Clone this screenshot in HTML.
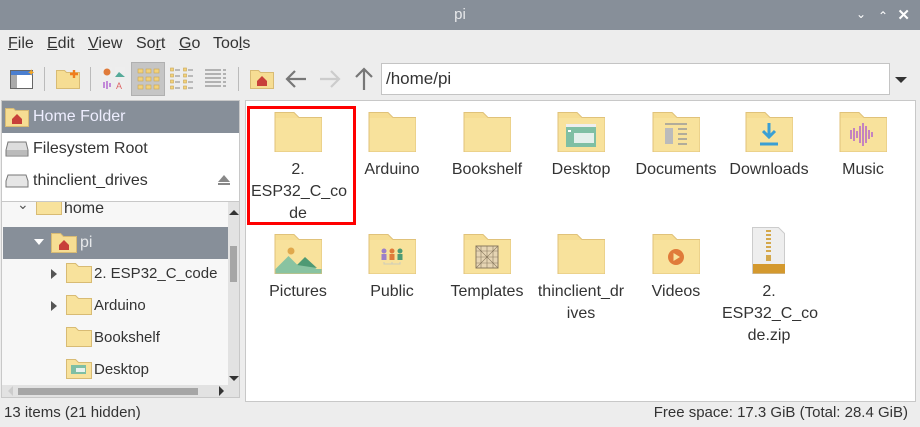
<!DOCTYPE html>
<html><head><meta charset="utf-8">
<style>
*{margin:0;padding:0;box-sizing:border-box}
body{width:920px;height:427px;overflow:hidden;background:#ededed;font-family:"Liberation Sans",sans-serif;font-size:15px;color:#333;position:relative}
.a{position:absolute}
.title{left:0;top:0;width:920px;height:30px;background:#878f99;color:#e8eaec;text-align:center;line-height:30px;font-size:15px}
.menu span{position:absolute;top:35px;font-size:16px;color:#333}
.u{text-decoration:underline}
.sep{position:absolute;top:67px;width:1px;height:24px;background:#bbb}
.item{position:absolute;width:94px;text-align:center;font-size:16px;line-height:22px;color:#333}
.item svg{display:block;margin:0 auto 7px}
.tr{position:absolute;font-size:15px;color:#333}
</style></head><body>
<svg width="0" height="0" style="position:absolute">
<defs>
<g id="fd"><path d="M1 0.5h19l5 5h22.5v34h-46.5z" fill="#f6dd93" stroke="#e0c27a"/><path d="M1.5 6h46v33.5h-46z" fill="#f8e29c"/></g>
<g id="sf"><path d="M0.5 0.5h9l3 3h13v16h-25z" fill="#f8e29c" stroke="#d8bb74"/></g>
</defs></svg>

<div class="a title">pi</div>
<div class="a" style="right:54px;top:7px;color:#fff;font-size:12px">&#8964;</div>
<div class="a" style="right:32px;top:9px;color:#fff;font-size:12px">&#8963;</div>
<div class="a" style="right:10px;top:6px;color:#fff;font-size:15px;font-weight:bold">✕</div>

<div class="menu">
<span style="left:8px"><span class="u" style="position:static">F</span>ile</span>
<span style="left:47px"><span class="u" style="position:static">E</span>dit</span>
<span style="left:88px"><span class="u" style="position:static">V</span>iew</span>
<span style="left:136px">So<span class="u" style="position:static">r</span>t</span>
<span style="left:179px"><span class="u" style="position:static">G</span>o</span>
<span style="left:213px">Too<span class="u" style="position:static">l</span>s</span>
</div>

<!-- toolbar -->
<svg class="a" style="left:10px;top:68px" width="24" height="22"><rect x="0.5" y="2.5" width="22" height="18" fill="#fff" stroke="#666"/><rect x="1" y="3" width="22" height="4" fill="#4b7fd0"/><rect x="1" y="7" width="6" height="13" fill="#aaa"/><text x="17" y="8" font-size="10" fill="#f5a623">✦</text></svg>
<div class="sep" style="left:44px"></div>
<svg class="a" style="left:56px;top:68px" width="25" height="22"><path d="M0.5 2.5h8l2 2h13v16h-23z" fill="#f6dd93" stroke="#d8bb74"/><path d="M18 2v8M14 6h8" stroke="#f07d1e" stroke-width="2.4"/></svg>
<div class="sep" style="left:90px"></div>
<svg class="a" style="left:102px;top:67px" width="24" height="24"><rect x="0" y="0" width="10" height="10" fill="#eee"/><circle cx="5" cy="5" r="3.5" fill="#e07b3a"/><rect x="13" y="0" width="10" height="10" fill="#eee"/><path d="M13 10l4-5 6 5z" fill="#5a9"/><rect x="0" y="13" width="10" height="10" fill="#eee"/><path d="M2 15v6M5 14v8M8 16v4" stroke="#a5c" stroke-width="1.3"/><rect x="13" y="13" width="10" height="10" fill="#eee"/><text x="14" y="22" font-size="9" fill="#d66">A</text></svg>
<div class="a" style="left:131px;top:62px;width:34px;height:34px;background:#c5c5c5;border:1px solid #b0b0b0"></div>
<svg class="a" style="left:137px;top:67px" width="24" height="24"><g fill="#f2d27a" stroke="#caa550" stroke-width="0.6"><rect x="1" y="2" width="5" height="4"/><rect x="9" y="2" width="5" height="4"/><rect x="17" y="2" width="5" height="4"/><rect x="1" y="10" width="5" height="4"/><rect x="9" y="10" width="5" height="4"/><rect x="17" y="10" width="5" height="4"/><rect x="1" y="18" width="5" height="4"/><rect x="9" y="18" width="5" height="4"/><rect x="17" y="18" width="5" height="4"/></g></svg>
<svg class="a" style="left:170px;top:67px" width="24" height="24"><g fill="#f2d27a" stroke="#caa550" stroke-width="0.6"><rect x="0.5" y="1" width="3" height="3"/><rect x="0.5" y="7" width="3" height="3"/><rect x="0.5" y="13" width="3" height="3"/><rect x="0.5" y="19" width="3" height="3"/><rect x="13.5" y="1" width="3" height="3"/><rect x="13.5" y="7" width="3" height="3"/><rect x="13.5" y="13" width="3" height="3"/><rect x="13.5" y="19" width="3" height="3"/></g><g stroke="#888"><path d="M5 3h5M5 9h5M5 15h5M5 21h5M18 3h5M18 9h5M18 15h5M18 21h5"/></g></svg>
<svg class="a" style="left:204px;top:68px" width="24" height="22"><g stroke="#777"><path d="M1 2h16M1 6h16M1 10h16M1 14h16M1 18h16M19 2h3M19 6h3M19 10h3M19 14h3M19 18h3"/></g></svg>
<div class="sep" style="left:238px"></div>
<svg class="a" style="left:250px;top:68px" width="25" height="22"><path d="M0.5 2.5h8l2 2h13v16h-23z" fill="#f6dd93" stroke="#d8bb74"/><path d="M7 13l5-5 5 5v5h-10z" fill="#c8403a"/></svg>
<svg class="a" style="left:284px;top:67px" width="24" height="24"><path d="M22 12H3M11 4l-8 8 8 8" stroke="#777" stroke-width="2.2" fill="none"/></svg>
<svg class="a" style="left:318px;top:67px" width="24" height="24"><path d="M2 12h19M13 4l8 8-8 8" stroke="#ccc" stroke-width="2.2" fill="none"/></svg>
<svg class="a" style="left:352px;top:66px" width="24" height="26"><path d="M12 24V3M4 11l8-8 8 8" stroke="#777" stroke-width="2.2" fill="none"/></svg>
<div class="a" style="left:381px;top:63px;width:509px;height:32px;background:#fff;border:1px solid #c4c4c4;padding:5px 4px;font-size:17px;color:#333">/home/pi</div>
<div class="a" style="left:895px;top:77px;width:0;height:0;border-left:6px solid transparent;border-right:6px solid transparent;border-top:6px solid #333"></div>

<!-- places -->
<div class="a" style="left:1px;top:100px;width:239px;height:102px;background:#fff;border:1px solid #c8c8c8"></div>
<div class="a" style="left:2px;top:101px;width:237px;height:32px;background:#878f99"></div>
<svg class="a" style="left:5px;top:106px" width="25" height="22"><path d="M0.5 2.5h8l2 2h13v16h-23z" fill="#f6dd93" stroke="#d8bb74"/><path d="M7 13l5-5 5 5v5h-10z" fill="#c8403a"/></svg>
<div class="tr" style="left:33px;top:108px;color:#eef;font-size:16px">Home Folder</div>
<svg class="a" style="left:5px;top:141px" width="24" height="16"><path d="M3 1h18l2 8v6H1v-6z" fill="#ddd" stroke="#777"/><rect x="1.5" y="9" width="21" height="5" fill="#bbb"/></svg>
<div class="tr" style="left:33px;top:140px;font-size:16px">Filesystem Root</div>
<svg class="a" style="left:5px;top:173px" width="24" height="16"><path d="M3 2h18l2 6v6H1v-6z" fill="#e6e6e6" stroke="#777"/></svg>
<div class="tr" style="left:33px;top:172px;font-size:16px">thinclient_drives</div>
<div class="a" style="left:218px;top:175px;width:0;height:0;border-left:6px solid transparent;border-right:6px solid transparent;border-bottom:7px solid #888"></div>
<div class="a" style="left:218px;top:183px;width:12px;height:2px;background:#888"></div>

<!-- tree -->
<div class="a" style="left:1px;top:201px;width:239px;height:197px;background:#f7f7f7;border:1px solid #c8c8c8;overflow:hidden">
<div class="a" style="left:1px;top:25px;width:225px;height:32px;background:#878f99"></div>
<div class="tr" style="left:15px;top:-6px;font-size:14px;color:#555">⌄</div>
<svg class="a" style="left:34px;top:-7px" width="26" height="20"><use href="#sf"/></svg>
<div class="tr" style="left:62px;top:-2px;font-size:16px">home</div>
<div class="a" style="left:32px;top:37px;width:0;height:0;border-left:5px solid transparent;border-right:5px solid transparent;border-top:6px solid #fff"></div>
<svg class="a" style="left:49px;top:31px" width="26" height="22"><path d="M0.5 0.5h9l3 3h13v16h-25z" fill="#f6dd93" stroke="#d8bb74"/><path d="M8 12l5-5 5 5v5H8z" fill="#c8403a"/></svg>
<div class="tr" style="left:78px;top:32px;font-size:16px;color:#e6e8ea">pi</div>
<div class="a" style="left:49px;top:67px;width:0;height:0;border-top:5px solid transparent;border-bottom:5px solid transparent;border-left:6px solid #555"></div>
<svg class="a" style="left:64px;top:61px" width="26" height="22"><use href="#sf"/></svg>
<div class="tr" style="left:92px;top:63px;font-size:15px">2. ESP32_C_code</div>
<div class="a" style="left:49px;top:99px;width:0;height:0;border-top:5px solid transparent;border-bottom:5px solid transparent;border-left:6px solid #555"></div>
<svg class="a" style="left:64px;top:93px" width="26" height="22"><use href="#sf"/></svg>
<div class="tr" style="left:92px;top:95px;font-size:15px">Arduino</div>
<svg class="a" style="left:64px;top:125px" width="26" height="22"><use href="#sf"/></svg>
<div class="tr" style="left:92px;top:127px;font-size:15px">Bookshelf</div>
<svg class="a" style="left:64px;top:157px" width="26" height="22"><use href="#sf"/><rect x="5" y="6" width="15" height="9" fill="#7fbfa4"/><rect x="10" y="9" width="9" height="4" fill="#e8f2ee"/></svg>
<div class="tr" style="left:92px;top:159px;font-size:15px">Desktop</div>
<div class="a" style="left:226px;top:0;width:12px;height:195px;background:#e2e2e2"></div>
<div class="a" style="left:228px;top:44px;width:7px;height:36px;background:#a6a6a6"></div>
<div class="a" style="left:227px;top:8px;border-left:5px solid transparent;border-right:5px solid transparent;border-bottom:5px solid #333"></div>
<div class="a" style="left:227px;top:174px;border-left:5px solid transparent;border-right:5px solid transparent;border-top:5px solid #333"></div>
<div class="a" style="left:0;top:183px;width:226px;height:13px;background:#e2e2e2"></div>
<div class="a" style="left:16px;top:186px;width:180px;height:7px;background:#a6a6a6"></div>
<div class="a" style="left:217px;top:184px;border-top:5px solid transparent;border-bottom:5px solid transparent;border-left:5px solid #333"></div>
<div class="a" style="left:6px;top:184px;border-top:5px solid transparent;border-bottom:5px solid transparent;border-right:5px solid #ccc"></div>
</div>

<!-- main pane -->
<div class="a" style="left:245px;top:100px;width:671px;height:302px;background:#fff;border:1px solid #c8c8c8"></div>
<div class="a" style="left:247px;top:106px;width:109px;height:119px;border:3px solid #f00"></div>

<div class="item" style="left:251px;top:112px"><svg width="48" height="40"><use href="#fd"/></svg>2.<br>ESP32_C_co<br>de</div>
<div class="item" style="left:345px;top:112px"><svg width="48" height="40"><use href="#fd"/></svg>Arduino</div>
<div class="item" style="left:440px;top:112px"><svg width="48" height="40"><use href="#fd"/></svg>Bookshelf</div>
<div class="item" style="left:534px;top:112px"><svg width="48" height="40"><use href="#fd"/><rect x="9" y="12" width="30" height="23" fill="#7fbfa4"/><rect x="9" y="12" width="30" height="3" fill="#eee"/><rect x="17" y="21" width="20" height="10" fill="#e4f0ec"/><rect x="11" y="18" width="3" height="2" fill="#fff"/></svg>Desktop</div>
<div class="item" style="left:629px;top:112px"><svg width="48" height="40"><use href="#fd"/><path d="M13 12h22M26 17h9M26 22h9M26 27h9M26 32h9" stroke="#999" stroke-width="1.5"/><rect x="13" y="16" width="8" height="16" fill="#bbb"/></svg>Documents</div>
<div class="item" style="left:722px;top:112px"><svg width="48" height="40"><use href="#fd"/><path d="M24 11v13M18 19l6 6 6-6M15 32h18" stroke="#3a9fd4" stroke-width="3" fill="none"/></svg>Downloads</div>
<div class="item" style="left:816px;top:112px"><svg width="48" height="40"><use href="#fd"/><path d="M12 18v9M15 16v13M18 19v7M21 14v17M24 11v23M27 14v17M30 18v9M33 20v5" stroke="#b86cc8" stroke-width="1.6"/></svg>Music</div>

<div class="item" style="left:251px;top:234px"><svg width="48" height="40"><use href="#fd"/><circle cx="17" cy="17" r="3.5" fill="#e0a84c"/><path d="M1.5 35l13-13 9 9 7-7 12 11z" fill="#89c3a1"/><path d="M23 31l8-8 12 11z" fill="#4e9a74"/><rect x="1.5" y="35" width="46" height="4.5" fill="#89c3a1"/></svg>Pictures</div>
<div class="item" style="left:345px;top:234px"><svg width="48" height="40"><use href="#fd"/><g><circle cx="16" cy="17" r="2.5" fill="#9b7fc8"/><rect x="13.5" y="20" width="5" height="6" fill="#9b7fc8"/><circle cx="24" cy="17" r="2.5" fill="#e07b3a"/><rect x="21.5" y="20" width="5" height="6" fill="#e07b3a"/><circle cx="32" cy="17" r="2.5" fill="#4e9a74"/><rect x="29.5" y="20" width="5" height="6" fill="#4e9a74"/><path d="M16 28v2h16v-2M24 28v2" stroke="#ccb" fill="none"/></g></svg>Public</div>
<div class="item" style="left:440px;top:234px"><svg width="48" height="40"><use href="#fd"/><rect x="13" y="12" width="22" height="22" fill="#e6d5b4" stroke="#8a7a60"/><path d="M13 17h22M13 23h22M13 29h22M18 12v22M24 12v22M30 12v22M13 12l22 22M35 12l-22 22" stroke="#8a7a60" stroke-width="0.6"/></svg>Templates</div>
<div class="item" style="left:534px;top:234px"><svg width="48" height="40"><use href="#fd"/></svg>thinclient_dr<br>ives</div>
<div class="item" style="left:629px;top:234px"><svg width="48" height="40"><use href="#fd"/><circle cx="24" cy="23" r="8" fill="#e07b3a"/><path d="M21.5 19v8l6.5-4z" fill="#f8e29c"/></svg>Videos</div>
<div class="item" style="left:722px;top:227px"><svg width="48" height="47" style="margin-bottom:7px"><path d="M7.5 0.5h26l6 6v40h-32z" fill="#eee" stroke="#ccc"/><rect x="8" y="37" width="32" height="9.5" fill="#d4992e"/><path d="M21 4h5M21 8h5M21 12h5M21 16h5M21 20h5M21 24h5" stroke="#d4a84c" stroke-width="2"/><rect x="21" y="28" width="5" height="6" fill="#d4a84c"/></svg>2.<br>ESP32_C_co<br>de.zip</div>

<!-- status -->
<div class="a" style="left:4px;top:404px;font-size:15px;color:#333">13 items (21 hidden)</div>
<div class="a" style="right:12px;top:404px;font-size:15px;color:#333">Free space: 17.3 GiB (Total: 28.4 GiB)</div>
</body></html>
